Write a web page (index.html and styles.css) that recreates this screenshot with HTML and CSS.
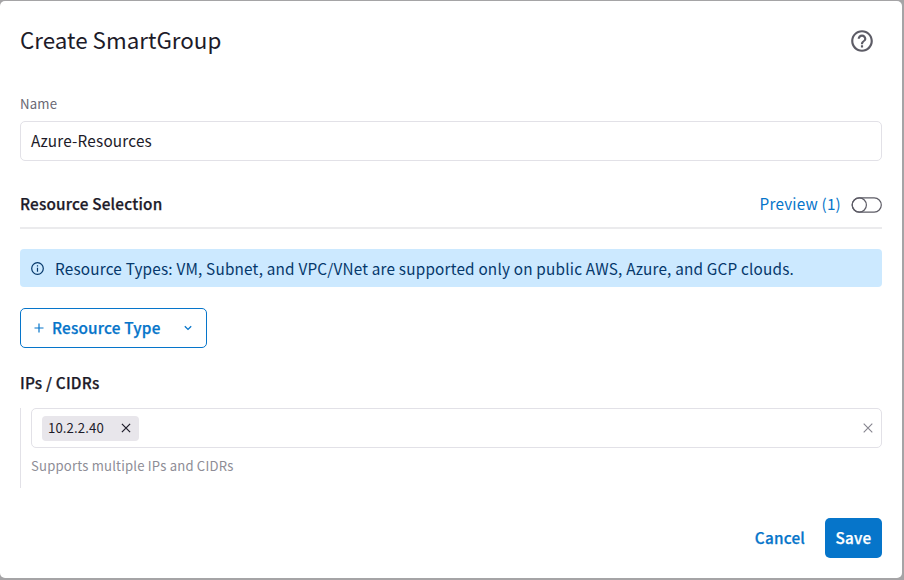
FILE: index.html
```html
<!DOCTYPE html>
<html lang="en">
<head>
<meta charset="utf-8">
<title>Create SmartGroup</title>
<link rel="stylesheet" href="styles.css">
</head>
<body>
<main class="dialog">
  <header class="dialog-header">
    <h1><span>Create SmartGroup</span></h1>
    <svg class="help" viewBox="0 0 24 24" width="26" height="26"><path fill="currentColor" d="M11 18h2v-2h-2v2zm1-16C6.48 2 2 6.48 2 12s4.480 10 10 10 10-4.480 10-10S17.520 2 12 2zm0 18c-4.410 0-8-3.590-8-8s3.590-8 8-8 8 3.590 8 8-3.590 8-8 8zm0-14c-2.210 0-4 1.790-4 4h2c0-1.100.9-2 2-2s2 .9 2 2c0 2-3 1.750-3 5h2c0-2.250 3-2.500 3-5 0-2.210-1.790-4-4-4z"/></svg>
  </header>
  <div class="label"><span>Name</span></div>
  <div class="field name-field"><span>Azure-Resources</span></div>
  <section class="section-bar">
    <h2><span>Resource Selection</span></h2>
    <div class="preview"><span>Preview (1)</span>
      <svg class="toggle" width="31" height="18" viewBox="0 0 31 18" fill="none" stroke="#5d5c66" stroke-width="1.2"><rect x="1.200" y="1.900" width="29.100" height="14.200" rx="7.100"/><circle cx="8.300" cy="9" r="7.100"/></svg>
    </div>
  </section>
  <div class="notice">
    <svg width="14" height="14" viewBox="0 0 14 14" fill="none" stroke="currentColor" stroke-width="1.2"><circle cx="6.500" cy="7.500" r="5.800"/><path d="M6.500 6.700v4M6.500 4.200v1.300"/></svg>
    <span>Resource Types: VM, Subnet, and VPC/VNet are supported only on public AWS, Azure, and GCP clouds.</span>
  </div>
  <button class="type-button">
    <svg width="10" height="10" viewBox="0 0 10 10" fill="none" stroke="currentColor" stroke-width="1.200"><path d="M5 .5v9M.5 5h9"/></svg>
    <span>Resource Type</span>
    <svg class="chevron" width="8" height="6" viewBox="0 0 8 6" fill="none" stroke="currentColor" stroke-width="1.300"><path d="M.8 1.200L4 4.400l3.200-3.200"/></svg>
  </button>
  <h2 class="ips-title"><span>IPs / CIDRs</span></h2>
  <div class="ips-group">
    <div class="field ips-field">
      <div class="chip"><span>10.2.2.40</span>
        <svg width="10" height="10" viewBox="0 0 10 10" stroke="currentColor" stroke-width="1.200"><path d="M.9.9l8.200 8.200M9.100.9L.9 9.100"/></svg>
      </div>
      <svg class="clear" width="10" height="10" viewBox="0 0 10 10" stroke="currentColor" stroke-width="1.100"><path d="M.7.7l8.600 8.600M9.300.7L.7 9.300"/></svg>
    </div>
    <div class="hint"><span>Supports multiple IPs and CIDRs</span></div>
  </div>
  <footer class="actions">
    <button class="cancel"><span>Cancel</span></button>
    <button class="save"><span>Save</span></button>
  </footer>
</main>
</body>
</html>
```
FILE: styles.css
```css
* { box-sizing: border-box; }
body {
  margin: 0;
  height: 580px;
  padding-top: 1px;
  overflow: hidden;
  background: #a5a4a6;
  color: #1d1b29;
  font: 400 15.3px/20px "Noto Sans CJK SC", "Open Sans", sans-serif;
  letter-spacing: .2px;
}
svg { display: block; flex: none; }
span { white-space: nowrap; }
.dialog {
  width: 902px;
  height: 577px;
  padding: 0 20px;
  background: #fff;
  border-radius: 5px;
}
.dialog-header {
  display: flex;
  align-items: center;
  justify-content: space-between;
  height: 80px;
  padding-right: 7px;
}
h1 { margin: 0; padding-bottom: 4px; font-size: 22.4px; font-weight: 400; line-height: 30px; letter-spacing: 0; }
h2 { margin: 0; font-size: 15.3px; font-weight: 500; }
h2, button { -webkit-text-stroke: .25px currentColor; }
.section-bar h2 { padding-bottom: 2px; }
.help { color: #5d5c66; }
.label { height: 40px; padding-top: 13px; color: #696873; font-size: 13.2px; }
.field {
  display: flex;
  align-items: center;
  height: 40px;
  border: 1px solid #e2e1e7;
  border-radius: 5px;
}
.name-field { padding: 0 0 2px 10px; }
.section-bar {
  display: flex;
  align-items: center;
  justify-content: space-between;
  height: 49px;
  margin-top: 19px;
  border-bottom: 2px solid #ebebed;
}
.preview { display: flex; align-items: center; gap: 10px; color: #0675ca; }
.preview span { padding-bottom: 2px; }
.toggle { margin-top: 2px; }
.notice {
  display: flex;
  align-items: center;
  gap: 10px;
  height: 38px;
  margin-top: 20px;
  padding-left: 11px;
  border-radius: 4px;
  background: #cce9ff;
  color: #05386b;
}
button { font: inherit; letter-spacing: inherit; font-weight: 500; border: 0; border-radius: 5px; padding: 0; }
button span { display: block; padding-bottom: 2px; }
.type-button {
  display: flex;
  align-items: center;
  gap: 8px;
  width: 187px;
  height: 40px;
  margin-top: 21px;
  padding: 0 14px 0 13px;
  border: 1px solid #0675ca;
  background: #fff;
  color: #0675ca;
}
.chevron { margin-left: auto; }
.ips-title { margin-top: 24px; }
.ips-group { height: 80px; margin-top: 16px; padding-left: 10px; border-left: 1px solid #e2e1e7; }
.ips-field { padding: 0 8px 0 10px; justify-content: space-between; }
.chip {
  display: flex;
  align-items: center;
  justify-content: space-between;
  width: 97px;
  height: 25px;
  padding: 0 8px 0 6px;
  border-radius: 4px;
  background: #e8e6eb;
  font-size: 13.2px;
  letter-spacing: .1px;
}
.clear { color: #85848e; }
.hint { padding-top: 8px; color: #8e8d96; font-size: 13.1px; }
.actions { display: flex; justify-content: flex-end; gap: 20px; margin-top: 30px; }
.cancel { background: none; color: #0675ca; }
.save { width: 57px; height: 40px; background: #0675ca; color: #fff; }
```
